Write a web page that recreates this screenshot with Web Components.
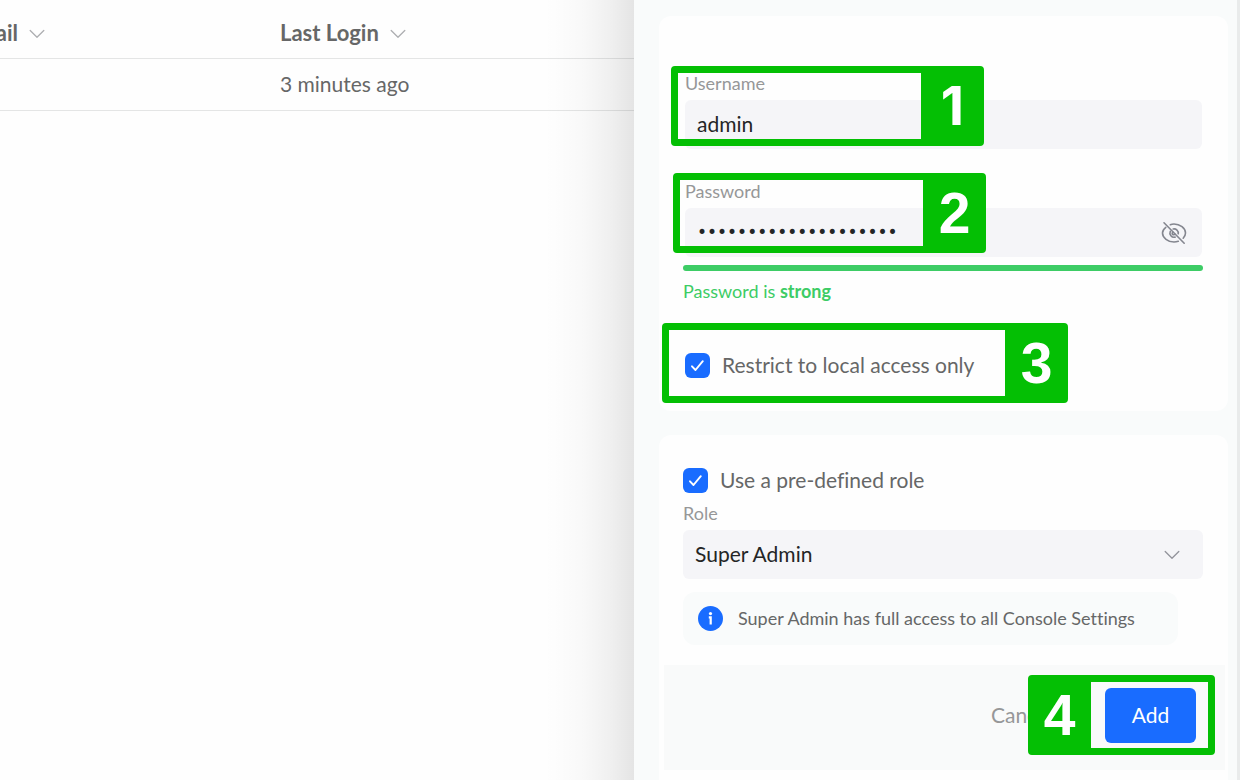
<!DOCTYPE html>
<html lang="en">
<head>
<meta charset="utf-8">
<meta name="viewport" content="width=device-width, initial-scale=1">
<title>Add Admin</title>
<style>
  html, body { height: 100%; }
  body {
    margin: 0;
    overflow: hidden;
    background: #fefefe;
    font-family: Lato, "Open Sans", sans-serif;
    font-size: 21px;
    line-height: 24px;
    font-variant-ligatures: none;
    color: #666767;
    --ink: #242526;
    --muted: #969798;
    --blue: #196cff;
    --green: #3dcc65;
    --mark: #04bf04;
    --field: #f5f5f8;
    --surface: #f9fbfb;
  }
</style>
</head>
<body>
<console-page>
  <admin-table slot="main"></admin-table>
  <side-drawer slot="drawer">
    <form-card class="login">
      <credentials-form></credentials-form>
    </form-card>
    <form-card class="role">
      <role-form></role-form>
      <action-bar slot="footer"></action-bar>
    </form-card>
  </side-drawer>
</console-page>

<script>
const define = (name, html, setup) => {
  const template = document.createElement('template');
  template.innerHTML = html;
  customElements.define(name, class extends HTMLElement {
    constructor() {
      super();
      this.attachShadow({ mode: 'open' }).append(template.content.cloneNode(true));
    }
    connectedCallback() {
      if (setup) setup(this, this.shadowRoot);
    }
  });
};

define('console-page', `
  <style>
    :host { display: grid; grid-template-columns: 634fr 606fr; min-height: 100vh; }
    .main { min-width: 0; overflow: hidden; }
    .drawer { min-width: 0; display: grid; position: relative; z-index: 1; }
  </style>
  <div class="main"><slot name="main"></slot></div>
  <div class="drawer"><slot name="drawer"></slot></div>
`);

define('chevron-icon', `
  <style>
    :host { display: inline-block; width: 16px; height: 10px; color: #adaeb1; }
    svg { display: block; }
  </style>
  <svg width="16" height="10" viewBox="0 0 16 10" fill="none" stroke="currentColor" stroke-width="1.3" stroke-linecap="round" stroke-linejoin="round" aria-hidden="true"><path d="M1.2 1.5 8 8.2l6.800-6.700"/></svg>
`);

define('admin-table', `
  <style>
    :host { display: block; }
    table { width: calc(100% + 35px); margin-left: -35px; border-collapse: separate; border-spacing: 0; table-layout: fixed; }
    col.mail { width: 315px; }
    th, td { box-sizing: border-box; text-align: left; padding: 0; border-bottom: 1px solid #e4e5e5; }
    th { height: 59px; padding-top: 8px; font-size: 22px; font-weight: 700; }
    td { height: 52px; padding-bottom: 1px; }
    chevron-icon { margin-left: 11px; vertical-align: 2px; }
  </style>
  <table>
    <colgroup><col class="mail"><col></colgroup>
    <thead><tr><th>Email<chevron-icon></chevron-icon></th><th>Last Login<chevron-icon></chevron-icon></th></tr></thead>
    <tbody><tr><td></td><td>3 minutes ago</td></tr></tbody>
  </table>
`);

define('side-drawer', `
  <style>
    :host {
      display: flex; flex-direction: column; gap: 24px; box-sizing: border-box; position: relative;
      padding: 16px 9px 0 25px; border-right: 3px solid #e9ebeb;
      height: 100vh; min-width: 0;
      background: var(--surface);
    }
    .shade {
      position: absolute; right: 100%; top: 0; bottom: 0; width: 90px; pointer-events: none;
      background: linear-gradient(to left, rgba(0, 0, 0, .1), rgba(0, 0, 0, .06) 25%, rgba(0, 0, 0, .025) 55%, rgba(0, 0, 0, .006) 82%, transparent);
    }
  </style>
  <div class="shade"></div>
  <slot></slot>
`);

define('form-card', `
  <style>
    :host { display: block; flex: none; border-radius: 12px; background: #fefefe; }
    .body { padding: 55px 25px 33px 24px; }
    :host(.role) .body { padding: 33px 25px 20px 24px; }
    :host(.role) { padding-bottom: 24px; }
  </style>
  <div class="body"><slot></slot></div>
  <slot name="footer"></slot>
`);

define('step-callout', `
  <style>
    :host {
      position: absolute; z-index: 2; box-sizing: border-box; height: 80px;
      display: flex; justify-content: flex-end;
      border: 7px solid var(--mark); border-radius: 4px; pointer-events: none;
    }
    span {
      width: 63px; margin-right: -7px; display: grid; place-items: center; background: var(--mark); color: #fff;
      border-radius: 4px; font: 700 57px/66px "Liberation Sans", Arial, sans-serif;
    }
    :host([side="left"]) { justify-content: flex-start; }
    :host([side="left"]) span { margin: 0 0 0 -7px; }
    :host([plain]) span { font-family: Inter, sans-serif; font-size: 54px; }
    span { border-radius: 0; }
  </style>
  <span><slot></slot></span>
`);

define('text-field', `
  <style>
    :host { display: grid; gap: 5px; position: relative; }
    label { font-size: 18px; color: var(--muted); }
    .box { display: grid; align-items: center; }
    .box > * { grid-area: 1 / 1; }
    input {
      box-sizing: border-box; width: 100%; height: 49px; min-width: 0; margin: 0; padding: 0 12px 2px;
      border: 0; border-radius: 6px; background: var(--field); color: var(--ink);
      font: inherit; outline: 0;
    }
    input[type="password"] { font-family: "DejaVu Sans", sans-serif; font-size: 17px; }
    button {
      justify-self: end; margin-right: 14px; padding: 0; border: 0; background: none;
      width: 28px; height: 28px; color: #84868f;
    }
    button[hidden] { display: none; }
    svg { display: block; }
  </style>
  <label for="field"></label>
  <div class="box">
    <input id="field">
    <button type="button" aria-label="Show password" hidden>
      <svg width="28" height="28" viewBox="0 0 28 28" fill="none" stroke="currentColor" stroke-width="1.600" stroke-linecap="round">
        <path d="M10.300 5.700C11.500 5.200 12.700 5 14 5c6 0 11.500 4.300 11.500 9 0 1.900-.9 3.700-2.300 5.200"/>
        <path d="M5.800 8.300C3.700 9.900 2.500 11.900 2.500 14c0 4.700 5.500 9 11.500 9 1.500 0 3-.3 4.300-.7"/>
        <path d="M13.200 10a4.200 4.200 0 0 1 5 4.800M10.300 12.300a4.200 4.200 0 0 0 4.800 5.800"/>
        <path d="M12.900 13.100a1.400 1.400 0 1 0 1.900 1.900"/>
        <path d="M4 3.800 24.200 24.200"/>
      </svg>
    </button>
  </div>
  <slot></slot>
`, (host, root) => {
  const input = root.querySelector('input');
  root.querySelector('label').textContent = host.getAttribute('label');
  input.type = host.getAttribute('type') || 'text';
  input.value = host.getAttribute('value');
  root.querySelector('button').hidden = input.type !== 'password';
});

define('check-field', `
  <style>
    :host { display: block; position: relative; }
    label { display: flex; align-items: center; gap: 12px; height: 25px; }
    .tick { display: grid; flex: none; }
    .tick > * { grid-area: 1 / 1; }
    .text { padding-bottom: 2px; }
    input { appearance: none; width: 25px; height: 25px; margin: 0; border-radius: 6px; background: #d5d6da; }
    input:checked { background: var(--blue); }
    svg { pointer-events: none; }
  </style>
  <label>
    <span class="tick">
      <input type="checkbox" checked>
      <svg width="25" height="25" viewBox="0 0 25 25" fill="none" stroke="#fff" stroke-width="1.900" stroke-linecap="round" stroke-linejoin="round" aria-hidden="true"><path d="m7 13.300 3.500 3.700 7.300-8.800"/></svg>
    </span>
    <span class="text"><slot></slot></span>
  </label>
  <slot name="callout"></slot>
`);

define('strength-meter', `
  <style>
    :host { display: grid; gap: 8px; margin-top: 8px; color: var(--green); font-size: 18px; }
    .bar { height: 6px; border-radius: 3px; background: var(--green); }
    p { margin: 0; }
    b { font-weight: 700; }
  </style>
  <div class="bar"></div>
  <p>Password is <b>strong</b></p>
`);

define('credentials-form', `
  <style>
    :host { display: block; }
    .inset { padding: 0 1px 0 2px; }
    .fields { display: grid; gap: 30px; }
    .access { margin-top: 50px; }
    .user { left: -14px; top: -5px; width: 313px; }
    .pass { left: -12px; top: -6px; width: 313px; }
    .local { left: -23px; top: -30px; width: 406px; }
  </style>
  <div class="inset fields">
    <text-field label="Username" value="admin"><step-callout class="user" plain>1</step-callout></text-field>
    <text-field label="Password" type="password" value="correct-horse-staple"><step-callout class="pass">2</step-callout></text-field>
  </div>
  <strength-meter></strength-meter>
  <div class="inset access">
    <check-field>Restrict to local access only<step-callout slot="callout" class="local">3</step-callout></check-field>
  </div>
`);

define('role-form', `
  <style>
    :host { display: block; }
    .field { display: grid; gap: 5px; margin-top: 8px; }
    .field label { font-size: 18px; color: var(--muted); }
    .box { display: grid; align-items: center; }
    .box > * { grid-area: 1 / 1; }
    select {
      appearance: none; box-sizing: border-box; width: 100%; height: 49px; padding: 0 48px 2px 12px;
      border: 0; border-radius: 6px; background: var(--field); color: var(--ink); font: inherit; outline: 0;
    }
    chevron-icon { justify-self: end; margin-right: 23px; color: #92939b; pointer-events: none; }
    .note {
      display: flex; align-items: center; gap: 15px; box-sizing: border-box; min-height: 53px;
      margin: 13px 25px 0 0; padding: 0 15px; border-radius: 12px; background: var(--surface);
      font-size: 18px;
    }
    .note svg { flex: none; }
    .note span { padding-bottom: 2px; }
  </style>
  <check-field>Use a pre-defined role</check-field>
  <div class="field">
    <label for="role">Role</label>
    <div class="box">
      <select id="role"><option>Super Admin</option></select>
      <chevron-icon></chevron-icon>
    </div>
  </div>
  <div class="note">
    <svg width="25" height="25" viewBox="0 0 25 25" aria-hidden="true"><circle cx="12.500" cy="12.500" r="12.500" fill="#196cff"/><circle cx="12.500" cy="7.600" r="1.600" fill="#fff"/><path d="M10.800 11.300h1.900v7.300" fill="none" stroke="#fff" stroke-width="2.200"/></svg>
    <span>Super Admin has full access to all Console Settings</span>
  </div>
`);

define('action-bar', `
  <style>
    :host {
      display: flex; align-items: center; justify-content: flex-end; gap: 52px; box-sizing: border-box;
      height: 105px; margin: 0 3px 0 5px; padding: 0 29px 4px 0; background: #f9fafa;
    }
    button { padding: 0 0 2px; border: 0; background: none; font: inherit; color: var(--muted); }
    .add { position: relative; display: grid; }
    .add button { width: 91px; height: 55px; border-radius: 6px; background: var(--blue); color: #fff; }
    step-callout { right: -19px; top: -13px; width: 187px; }
  </style>
  <button type="button">Cancel</button>
  <div class="add">
    <button type="submit">Add</button>
    <step-callout side="left">4</step-callout>
  </div>
`);
</script>
</body>
</html>
